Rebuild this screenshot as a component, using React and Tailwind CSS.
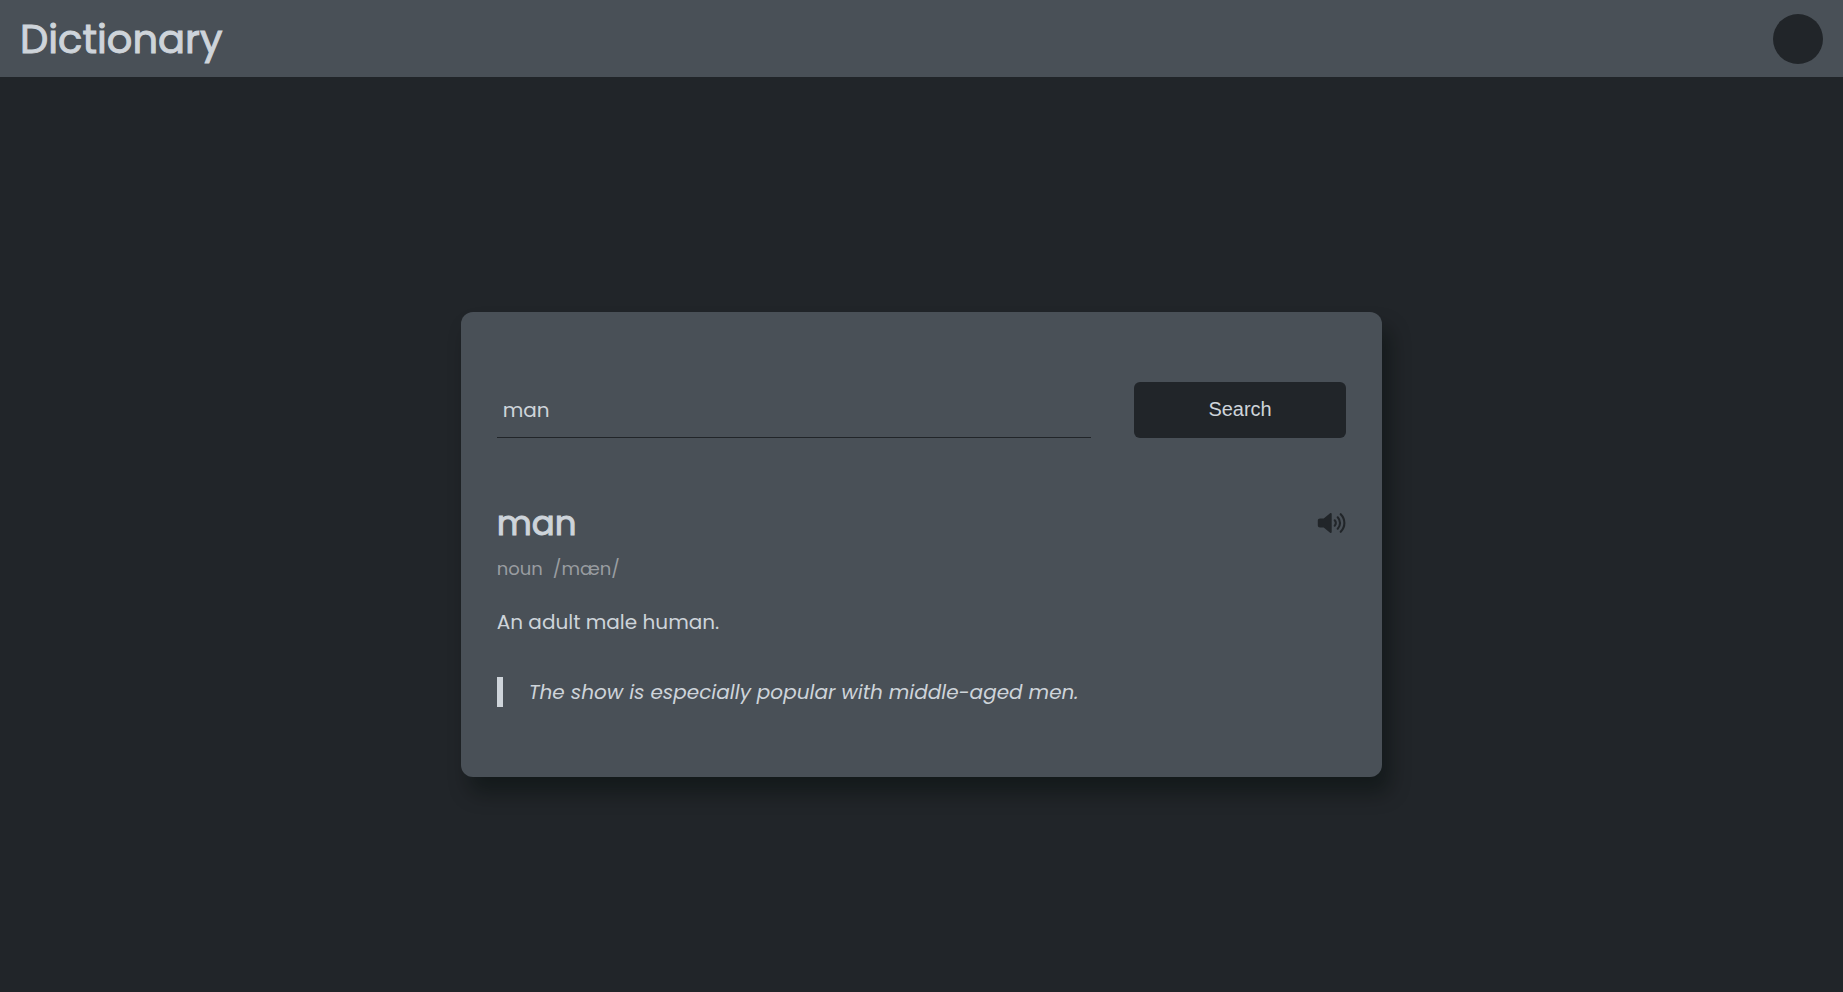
import { useState } from "react";

function SpeakerIcon() {
  return (
    <svg viewBox="0 0 29 22" className="h-[22px] w-[29px]" fill="none" aria-hidden="true">
      <path d="M3 6.500h3.700L13.100 1.200c.8-.6 1.600-.3 1.600.7v18.200c0 1-.8 1.300-1.600.7L6.700 15.500H3c-1.200 0-2.200-.8-2.200-2v-5c0-1.200 1-2 2.200-2Z" fill="currentColor" />
      <path d="M17.700 8.300c1.500 1.500 1.500 3.900 0 5.400M20.700 5.300c3.100 3.200 3.100 8.200 0 11.400M23.700 2.200c4.900 5 4.900 12.600 0 17.600" stroke="currentColor" strokeWidth="2.1" strokeLinecap="round" />
    </svg>
  );
}

export default function App() {
  const [word, setWord] = useState("man");
  return (
    <div className="flex min-h-screen flex-col bg-[#212529] font-['Poppins','Inter',sans-serif] text-[20px] leading-[30px] text-[#ced4da]">
      <header className="flex items-center justify-between bg-[#495057] px-5 py-[8px]">
        <h1 className="pt-0.5 text-[40px] leading-[59px] font-normal [-webkit-text-stroke:1px_currentColor]">Dictionary</h1>
        <button type="button" aria-label="Toggle theme" className="size-[50px] rounded-full bg-[#212529]" />
      </header>
      <main className="flex flex-1 items-center justify-center pt-5">
        <section className="w-1/2 rounded-xl bg-[#495057] px-9 py-[70px] shadow-[8px_16px_20px_rgba(0,10,8,0.4)]">
          <form className="flex justify-between" onSubmit={(e) => e.preventDefault()}>
            <input
              type="text"
              aria-label="Word"
              value={word}
              onChange={(e) => setWord(e.target.value)}
              className="h-14 w-[70%] border-b border-[#212529] bg-transparent px-1.5 outline-none"
            />
            <button type="submit" className="h-14 w-1/4 rounded-md bg-[#212529] pb-0.5 font-['Liberation_Sans',Arial,sans-serif]">
              Search
            </button>
          </form>
          <div className="mt-[60px] flex items-center justify-between">
            <h2 className="text-[34px] leading-[50px] font-normal [-webkit-text-stroke:1px_currentColor]">man</h2>
            <button type="button" aria-label="Play pronunciation" className="text-[#212529]">
              <SpeakerIcon />
            </button>
          </div>
          <div className="mt-2 flex gap-2.5 text-[18px] leading-[25px] text-[#999da1]">
            <p>noun</p>
            <p>/mæn/</p>
          </div>
          <p className="mt-[26px]">An adult male human.</p>
          <blockquote className="mt-10 border-l-[6px] border-[#ced4da] pl-[26px] italic">
            The show is especially popular with middle-aged men.
          </blockquote>
        </section>
      </main>
    </div>
  );
}
